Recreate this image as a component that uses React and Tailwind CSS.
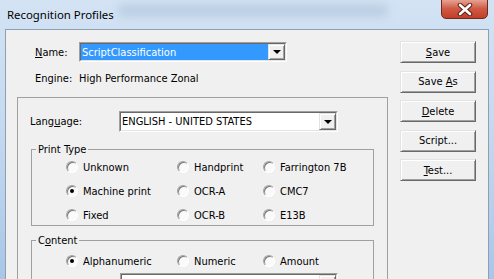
import React from 'react';

const Arrow = () => (
    <span className="w-0 h-0 border-x-[4px] border-x-transparent border-t-[4px] border-t-black" />
);

const DropButton = () => (
    <div className="w-[17px] h-full flex items-center justify-center bg-[#f0f0f0] border border-t-[#e3e3e3] border-l-[#e3e3e3] border-b-[#696969] border-r-[#696969] shadow-[inset_1px_1px_0_#ffffff,inset_-1px_-1px_0_#a0a0a0]">
        <Arrow />
    </div>
);

const Combo = ({ value, selected, className }) => (
    <div className={`flex border border-t-[#a0a0a0] border-l-[#a0a0a0] border-b-white border-r-white ${className}`}>
        <div className="flex flex-1 border border-t-[#696969] border-l-[#696969] border-b-[#e3e3e3] border-r-[#e3e3e3] bg-white">
            <div className="flex-1 flex items-center">
                <span className={`h-full flex-1 flex items-center pl-[1px] ${selected ? 'bg-[#3399ff] text-white' : ''}`}>{value}</span>
            </div>
            <DropButton />
        </div>
    </div>
);

const Radio = ({ label, checked }) => (
    <div className="flex items-center h-[18px]">
        <span className="w-[12px] h-[12px] shrink-0 rounded-full border border-t-[#a4a4a4] border-l-[#a4a4a4] border-b-white border-r-white bg-[#fafafa] shadow-[inset_1px_1px_0_#7a7a7a] flex items-center justify-center">
            {checked && <span className="w-[4px] h-[4px] rounded-full bg-black" />}
        </span>
        <span className="ml-[5px]">{label}</span>
    </div>
);

const Button = ({ children }) => (
    <button className="w-[76px] h-[22px] flex items-center justify-center bg-[#f0f0f0] border border-t-[#e3e3e3] border-l-[#e3e3e3] border-b-[#696969] border-r-[#696969] shadow-[inset_1px_1px_0_#ffffff,inset_-1px_-1px_0_#a0a0a0]">
        <span>{children}</span>
    </button>
);

const U = ({ children }) => <span className="underline underline-offset-[1px]">{children}</span>;

export default function App() {
    return (
        <div className="relative w-[494px] h-[279px] overflow-hidden flex flex-col bg-gradient-to-b from-[#d3e3f4] via-[#c3d8ef] to-[#a9c6e8] text-[11px] leading-[13px] text-black font-['DejaVu_Sans_Condensed','Liberation_Sans',sans-serif]">
            {/* title bar */}
            <div className="relative h-[29px] shrink-0 flex items-start">
                <div className="absolute left-[118px] top-[4px] w-[270px] h-[13px] bg-[#9db3cc] opacity-40 blur-[4px] rounded" />
                <span className="relative mt-[8px] ml-[7px] text-[11.4px] leading-[14px] font-['Noto_Sans',sans-serif] text-black">Recognition Profiles</span>
                <div className="absolute left-[441px] top-[-2px] w-[47px] h-[21px] rounded-b-[5px] border border-[#6b2b22] bg-gradient-to-b from-[#e9a99b] via-[#cf5a45] to-[#c23f26] shadow-[inset_0_1px_0_rgba(255,255,255,0.5)] flex items-center justify-center">
                    <svg width="16" height="13" viewBox="0 0 16 13" className="mt-[2px]">
                        <path d="M3 2 L13 11 M13 2 L3 11" stroke="#5a1f16" strokeWidth="4.5" strokeLinecap="round" />
                        <path d="M3 2 L13 11 M13 2 L3 11" stroke="#ffffff" strokeWidth="2.6" strokeLinecap="round" />
                    </svg>
                </div>
            </div>

            {/* client area */}
            <div className="ml-[5px] w-[484px] flex-1 flex border-l border-t border-r border-[#8e9fb4] bg-[#f0f0f0]">
                {/* left column */}
                <div className="w-[382px] flex flex-col">
                    <div className="mt-[12px] ml-[29px] flex items-center">
                        <span className="w-[44px]"><U>N</U>ame:</span>
                        <Combo value="ScriptClassification" selected className="w-[208px] h-[20px]" />
                    </div>
                    <div className="mt-[10px] ml-[29px] flex items-center">
                        <span className="w-[44px]">Engine:</span>
                        <span>High Performance Zonal</span>
                    </div>

                    {/* settings panel */}
                    <div className="mt-[12px] ml-[11px] w-[371px] flex-1 border-l border-t border-r border-[#a0a0a0] flex flex-col">
                        <div className="mt-[13px] ml-[12px] flex items-center">
                            <span className="w-[89px]">Lang<U>u</U>age:</span>
                            <Combo value="ENGLISH - UNITED STATES" className="w-[219px] h-[21px]" />
                        </div>

                        <fieldset className="mt-[11px] ml-[13px] w-[343px] border border-[#a0a0a0] pb-[1px]">
                            <legend className="ml-[4px] px-[2px]">Print Type</legend>
                            <div className="mt-[2px] pl-[34px] grid grid-cols-[111px_86px_auto] gap-y-[6px]">
                                <Radio label="Unknown" />
                                <Radio label="Handprint" />
                                <Radio label="Farrington 7B" />
                                <Radio label="Machine print" checked />
                                <Radio label="OCR-A" />
                                <Radio label="CMC7" />
                                <Radio label="Fixed" />
                                <Radio label="OCR-B" />
                                <Radio label="E13B" />
                            </div>
                        </fieldset>

                        <fieldset className="mt-[8px] ml-[13px] w-[343px] border border-[#a0a0a0]">
                            <legend className="ml-[4px] px-[2px]">C<U>o</U>ntent</legend>
                            <div className="mt-[5px] pl-[34px] grid grid-cols-[111px_86px_auto]">
                                <Radio label="Alphanumeric" checked />
                                <Radio label="Numeric" />
                                <Radio label="Amount" />
                            </div>
                            <Combo value="" className="mt-[3px] ml-[88px] w-[218px] h-[21px]" />
                        </fieldset>
                    </div>
                </div>

                {/* right buttons */}
                <div className="ml-[12px] mt-[11px] flex flex-col gap-[7.5px]">
                    <Button><U>S</U>ave</Button>
                    <Button>Save <U>A</U>s</Button>
                    <Button><U>D</U>elete</Button>
                    <Button>Script...</Button>
                    <Button><U>T</U>est...</Button>
                </div>
            </div>
        </div>
    );
}
